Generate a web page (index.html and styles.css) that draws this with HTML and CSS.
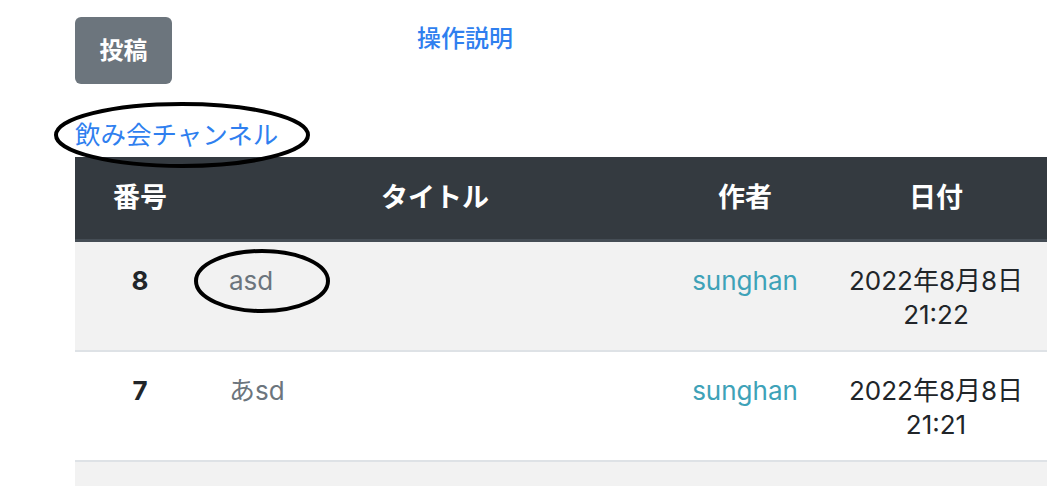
FILE: index.html
```html
<!DOCTYPE html>
<html lang="ja">
<head>
<meta charset="utf-8">
<title>飲み会チャンネル</title>
<link rel="stylesheet" href="styles.css">
</head>
<body>
<div class="page">
  <div class="topbar">
    <a class="btn-post" href="#">投稿</a>
    <a class="help-link" href="#">操作説明</a>
  </div>
  <div class="channel-wrap">
    <a class="channel" href="#">飲み会チャンネル</a>
    <svg class="mark mark-channel" width="260" height="70" viewBox="0 0 260 70"><ellipse cx="130" cy="35" rx="126" ry="31" fill="none" stroke="#000" stroke-width="4"/></svg>
  </div>
  <table class="board">
    <colgroup>
      <col class="c-num"><col class="c-title"><col class="c-author"><col class="c-date">
    </colgroup>
    <thead>
      <tr><th>番号</th><th>タイトル</th><th>作者</th><th>日付</th></tr>
    </thead>
    <tbody>
      <tr class="odd">
        <td class="num">8</td>
        <td class="title"><span class="title-wrap"><a href="#">asd</a><svg class="mark mark-title" width="140" height="68" viewBox="0 0 140 68"><ellipse cx="70" cy="34" rx="66" ry="30" fill="none" stroke="#000" stroke-width="4"/></svg></span></td>
        <td class="author"><a href="#">sunghan</a></td>
        <td class="date">2022年8月8日<br>21:22</td>
      </tr>
      <tr>
        <td class="num">7</td>
        <td class="title"><a href="#">あsd</a></td>
        <td class="author"><a href="#">sunghan</a></td>
        <td class="date">2022年8月8日<br>21:21</td>
      </tr>
      <tr class="odd empty">
        <td></td><td></td><td></td><td></td>
      </tr>
    </tbody>
  </table>
</div>
</body>
</html>
```

FILE: styles.css
```css
* { box-sizing: border-box; }
html, body { margin: 0; padding: 0; background: #fff; }
body {
  font-family: Inter, "Noto Sans CJK JP", sans-serif;
  color: #212529;
  font-size: 24px;
  line-height: 36px;
}
a { text-decoration: none; }
.page {
  padding: 17px 11px 0 75px;
}
.topbar {
  display: flex;
  align-items: flex-start;
}
.btn-post {
  display: flex;
  align-items: center;
  justify-content: center;
  width: 97px;
  height: 67px;
  background: #6c757d;
  color: #fff;
  border-radius: 6px;
  font-weight: 700;
  font-size: 24px;
}
.help-link {
  margin-left: 245px;
  margin-top: 4px;
  color: #2f7fef;
  font-weight: 500;
  font-size: 24px;
}
.channel-wrap {
  position: relative;
  margin-top: 33px;
  margin-bottom: 4px;
  height: 36px;
}
.channel {
  color: #2f7fef;
  font-size: 25.5px;
}
.mark { position: absolute; pointer-events: none; }
.mark-channel { left: -23px; top: -17px; }
.board {
  width: 972px;
  border-collapse: collapse;
  table-layout: fixed;
  font-size: 26px;
  line-height: 34px;
}
.c-num { width: 130px; }
.c-title { width: 460px; }
.c-author { width: 160px; }
.c-date { width: 222px; }
.board th {
  background: #343a40;
  color: #fff;
  font-weight: 700;
  font-size: 27px;
  text-align: center;
  padding: 24px 18px;
  border-bottom: 3px solid #454d55;
}
.board td {
  padding: 22px 18px 18px;
  border-bottom: 2px solid #dee2e6;
  vertical-align: top;
  text-align: center;
}
.board tr.odd td { background: #f2f2f2; }
.board tr.empty td { height: 108px; }
.board td.num { font-weight: 700; }
.board td.title { text-align: left; padding-left: 24px; }
.board td.title a { color: #6c757d; }
.title-wrap { position: relative; display: inline-block; }
.mark-title { left: -37px; top: -17px; }
.board td.author a { color: #3ea2b8; }
.board td.date { padding-left: 12px; padding-right: 12px; }
```
